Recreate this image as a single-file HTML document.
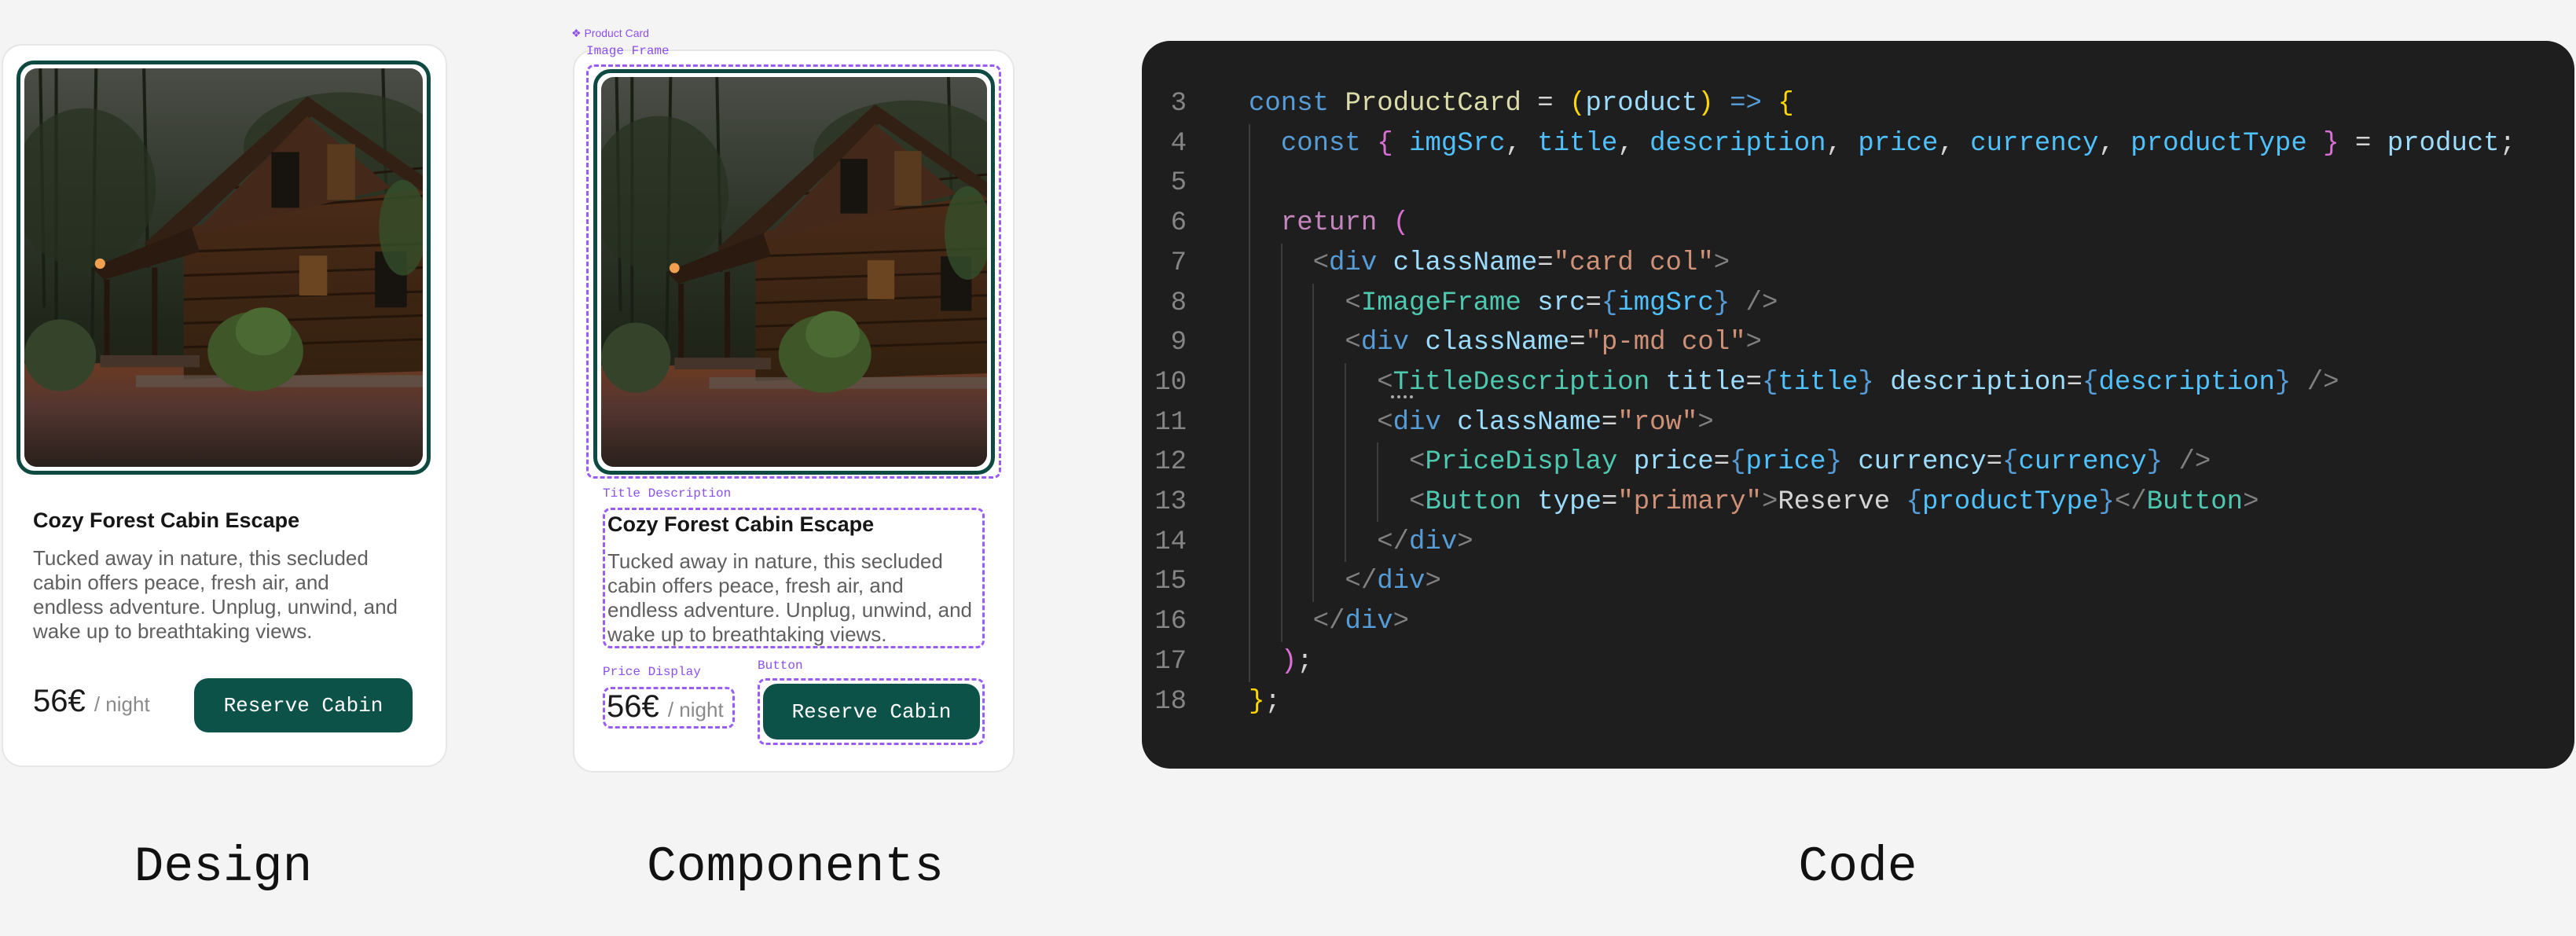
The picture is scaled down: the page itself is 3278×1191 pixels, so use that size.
<!DOCTYPE html>
<html><head><meta charset="utf-8"><style>
*{margin:0;padding:0;box-sizing:border-box}
body{width:3278px;height:1191px;background:#f4f4f4;position:relative;overflow:hidden;font-family:"Liberation Sans",sans-serif}
.abs{position:absolute}
.card{position:absolute;background:#fff;border:2px solid #e6e6e6;border-radius:26px}
.frame{position:absolute;border:5px solid #0e4a42;border-radius:22px;background:#fff;padding:5px}
.frame svg{display:block;width:100%;height:100%;border-radius:16px}
.title{position:absolute;font-weight:bold;font-size:27px;color:#161616;white-space:nowrap}
.desc{position:absolute;font-size:26px;line-height:31px;color:#5f5f5f;white-space:nowrap}
.price{position:absolute;font-size:40px;color:#1a1a1a;white-space:nowrap}
.price span{font-size:26px;color:#8a8a8a}
.btn{position:absolute;background:#0d5249;border-radius:18px;color:#fff;font-family:"Liberation Mono",monospace;font-size:26px;display:flex;align-items:center;justify-content:center}
.dash{position:absolute;border:3px dashed #9b5cf6;border-radius:10px}
.lbl{position:absolute;font-family:"Liberation Mono",monospace;font-size:16px;color:#8b4ff0;white-space:nowrap}
.big{position:absolute;font-family:"Liberation Mono",monospace;font-size:63px;color:#111;top:1068px;white-space:nowrap;transform:translateX(-50%)}
.code{position:absolute;left:1453px;top:52px;width:1823px;height:926px;background:#1e1e1e;border-radius:36px}
pre{position:absolute;font-family:"Liberation Mono",monospace;font-size:34px;line-height:50.7px;white-space:pre;color:#d4d4d4}
.ln{color:#858585;text-align:right;left:1440px;width:70px;top:107px}
.src{left:1589px;top:107px}
.g{position:absolute;width:2px;background:#3c3c3c}
.k{color:#569cd6}.f{color:#dcdcaa}.y{color:#ffd700}.v{color:#9cdcfe}.p{color:#da70d6}.c{color:#4fc1ff}.r{color:#c586c0}.t{color:#808080}.s{color:#ce9178}.m{color:#4ec9b0}
</style></head><body>
<svg width="0" height="0" style="position:absolute">
<defs>
<linearGradient id="sky" x1="0" y1="0" x2="0" y2="1"><stop offset="0" stop-color="#4a4d46"/><stop offset=".35" stop-color="#2f362a"/><stop offset=".65" stop-color="#20261a"/><stop offset="1" stop-color="#241c15"/></linearGradient>
<linearGradient id="gr" x1="0" y1="0" x2="0" y2="1"><stop offset="0" stop-color="#6a3a22"/><stop offset=".4" stop-color="#553630"/><stop offset="1" stop-color="#2a201c"/></linearGradient>
<linearGradient id="wall" x1="0" y1="0" x2="0" y2="1"><stop offset="0" stop-color="#4a2b18"/><stop offset="1" stop-color="#33200f"/></linearGradient>
<symbol id="cabin" viewBox="0 0 100 100" preserveAspectRatio="none">
<rect width="100" height="100" fill="url(#sky)"/>
<g stroke="#1a1f15" stroke-width=".8"><line x1="8" y1="0" x2="8" y2="70"/><line x1="18" y1="0" x2="17" y2="68"/><line x1="90" y1="0" x2="91" y2="40"/><line x1="30" y1="0" x2="31" y2="50"/><line x1="4" y1="0" x2="5" y2="60"/></g>
<ellipse cx="80" cy="20" rx="25" ry="14" fill="#283220" opacity=".7"/>
<ellipse cx="15" cy="30" rx="18" ry="20" fill="#26301f" opacity=".7"/>
<rect x="0" y="74" width="100" height="26" fill="url(#gr)"/>
<polygon points="40,40 100,30 100,76 40,78" fill="url(#wall)"/>
<g stroke="#24150b" stroke-width=".6"><line x1="40" y1="46" x2="100" y2="44"/><line x1="40" y1="52" x2="100" y2="50"/><line x1="40" y1="58" x2="100" y2="56"/><line x1="40" y1="64" x2="100" y2="62"/><line x1="40" y1="70" x2="100" y2="68"/><line x1="52" y1="30" x2="100" y2="25"/><line x1="48" y1="36" x2="100" y2="32"/></g>
<polygon points="30,44 71,7 100,27 100,31 72,12 36,46" fill="#332015"/>
<polygon points="42,42 71,12 92,30 42,42" fill="#44291a"/>
<polygon points="17,50 42,40 44,46 20,53" fill="#2a1a10"/>
<rect x="20" y="53" width="1.4" height="22" fill="#24160d"/><rect x="32" y="50" width="1.4" height="24" fill="#24160d"/>
<rect x="19" y="72" width="25" height="3" fill="#45342a"/>
<rect x="62" y="21" width="7" height="14" fill="#17130f"/><rect x="76" y="19" width="7" height="14" fill="#5a3a1e"/>
<rect x="69" y="47" width="7" height="10" fill="#6b4521"/><rect x="88" y="46" width="8" height="14" fill="#17130f"/>
<circle cx="19" cy="49" r="1.3" fill="#f0a050"/>
<rect x="28" y="77" width="72" height="3" fill="#5f574e" opacity=".7"/>
<ellipse cx="9" cy="72" rx="9" ry="9" fill="#34432a"/>
<ellipse cx="58" cy="71" rx="12" ry="10" fill="#3f5629"/>
<ellipse cx="60" cy="66" rx="7" ry="6" fill="#4b6a33"/>
<ellipse cx="95" cy="40" rx="6" ry="12" fill="#34502a" opacity=".8"/>
</symbol>
</defs></svg>

<!-- Design card -->
<div class="card" style="left:2px;top:56px;width:567px;height:920px"></div>
<div class="frame" style="left:21px;top:77px;width:527px;height:527px"><svg><use href="#cabin" width="100%" height="100%"/></svg></div>
<div class="title" style="left:42px;top:647px">Cozy Forest Cabin Escape</div>
<div class="desc" style="left:42px;top:695px">Tucked away in nature, this secluded<br>cabin offers peace, fresh air, and<br>endless adventure. Unplug, unwind, and<br>wake up to breathtaking views.</div>
<div class="price" style="left:42px;top:870px">56€ <span>/ night</span></div>
<div class="btn" style="left:247px;top:863px;width:278px;height:69px">Reserve Cabin</div>

<!-- Components card -->
<div class="abs" style="left:727px;top:34px;font-size:14px;color:#8b4ff0">❖ Product Card</div>
<div class="card" style="left:729px;top:63px;width:562px;height:920px"></div>
<div class="lbl" style="left:746px;top:56px">Image Frame</div>
<div class="dash" style="left:746px;top:82px;width:528px;height:527px"></div>
<div class="frame" style="left:755px;top:88px;width:511px;height:516px"><svg><use href="#cabin" width="100%" height="100%"/></svg></div>
<div class="lbl" style="left:767px;top:619px">Title Description</div>
<div class="dash" style="left:767px;top:646px;width:486px;height:179px"></div>
<div class="title" style="left:773px;top:652px">Cozy Forest Cabin Escape</div>
<div class="desc" style="left:773px;top:699px">Tucked away in nature, this secluded<br>cabin offers peace, fresh air, and<br>endless adventure. Unplug, unwind, and<br>wake up to breathtaking views.</div>
<div class="lbl" style="left:767px;top:846px">Price Display</div>
<div class="lbl" style="left:964px;top:838px">Button</div>
<div class="dash" style="left:767px;top:874px;width:168px;height:53px"></div>
<div class="price" style="left:772px;top:877px">56€ <span>/ night</span></div>
<div class="dash" style="left:964px;top:863px;width:289px;height:85px"></div>
<div class="btn" style="left:971px;top:870px;width:276px;height:71px">Reserve Cabin</div>

<!-- Code -->
<div class="code"></div>
<div class="g" style="left:1589px;top:158px;height:710px"></div>
<div class="g" style="left:1630px;top:310px;height:507px"></div>
<div class="g" style="left:1670px;top:361px;height:405px"></div>
<div class="g" style="left:1711px;top:462px;height:253px"></div>
<div class="g" style="left:1752px;top:563px;height:101px"></div>
<pre class="ln">3
4
5
6
7
8
9
10
11
12
13
14
15
16
17
18</pre>
<pre class="src"><span class="k">const</span> <span class="f">ProductCard</span> = <span class="y">(</span><span class="v">product</span><span class="y">)</span> <span class="k">=&gt;</span> <span class="y">{</span>
  <span class="k">const</span> <span class="p">{</span> <span class="c">imgSrc</span>, <span class="c">title</span>, <span class="c">description</span>, <span class="c">price</span>, <span class="c">currency</span>, <span class="c">productType</span> <span class="p">}</span> = <span class="v">product</span>;

  <span class="r">return</span> <span class="p">(</span>
    <span class="t">&lt;</span><span class="k">div</span> <span class="v">className</span>=<span class="s">"card col"</span><span class="t">&gt;</span>
      <span class="t">&lt;</span><span class="m">ImageFrame</span> <span class="v">src</span>=<span class="k">{</span><span class="c">imgSrc</span><span class="k">}</span> <span class="t">/&gt;</span>
      <span class="t">&lt;</span><span class="k">div</span> <span class="v">className</span>=<span class="s">"p-md col"</span><span class="t">&gt;</span>
        <span class="t">&lt;</span><span class="m">TitleDescription</span> <span class="v">title</span>=<span class="k">{</span><span class="c">title</span><span class="k">}</span> <span class="v">description</span>=<span class="k">{</span><span class="c">description</span><span class="k">}</span> <span class="t">/&gt;</span>
        <span class="t">&lt;</span><span class="k">div</span> <span class="v">className</span>=<span class="s">"row"</span><span class="t">&gt;</span>
          <span class="t">&lt;</span><span class="m">PriceDisplay</span> <span class="v">price</span>=<span class="k">{</span><span class="c">price</span><span class="k">}</span> <span class="v">currency</span>=<span class="k">{</span><span class="c">currency</span><span class="k">}</span> <span class="t">/&gt;</span>
          <span class="t">&lt;</span><span class="m">Button</span> <span class="v">type</span>=<span class="s">"primary"</span><span class="t">&gt;</span>Reserve <span class="k">{</span><span class="c">productType</span><span class="k">}</span><span class="t">&lt;/</span><span class="m">Button</span><span class="t">&gt;</span>
        <span class="t">&lt;/</span><span class="k">div</span><span class="t">&gt;</span>
      <span class="t">&lt;/</span><span class="k">div</span><span class="t">&gt;</span>
    <span class="t">&lt;/</span><span class="k">div</span><span class="t">&gt;</span>
  <span class="p">)</span>;
<span class="y">}</span>;</pre>
<div class="abs" style="left:1770px;top:503px;width:28px;height:4px;border-top:4px dotted #aaa"></div>

<div class="big" style="left:284px">Design</div>
<div class="big" style="left:1012px">Components</div>
<div class="big" style="left:2364px">Code</div>
</body></html>
